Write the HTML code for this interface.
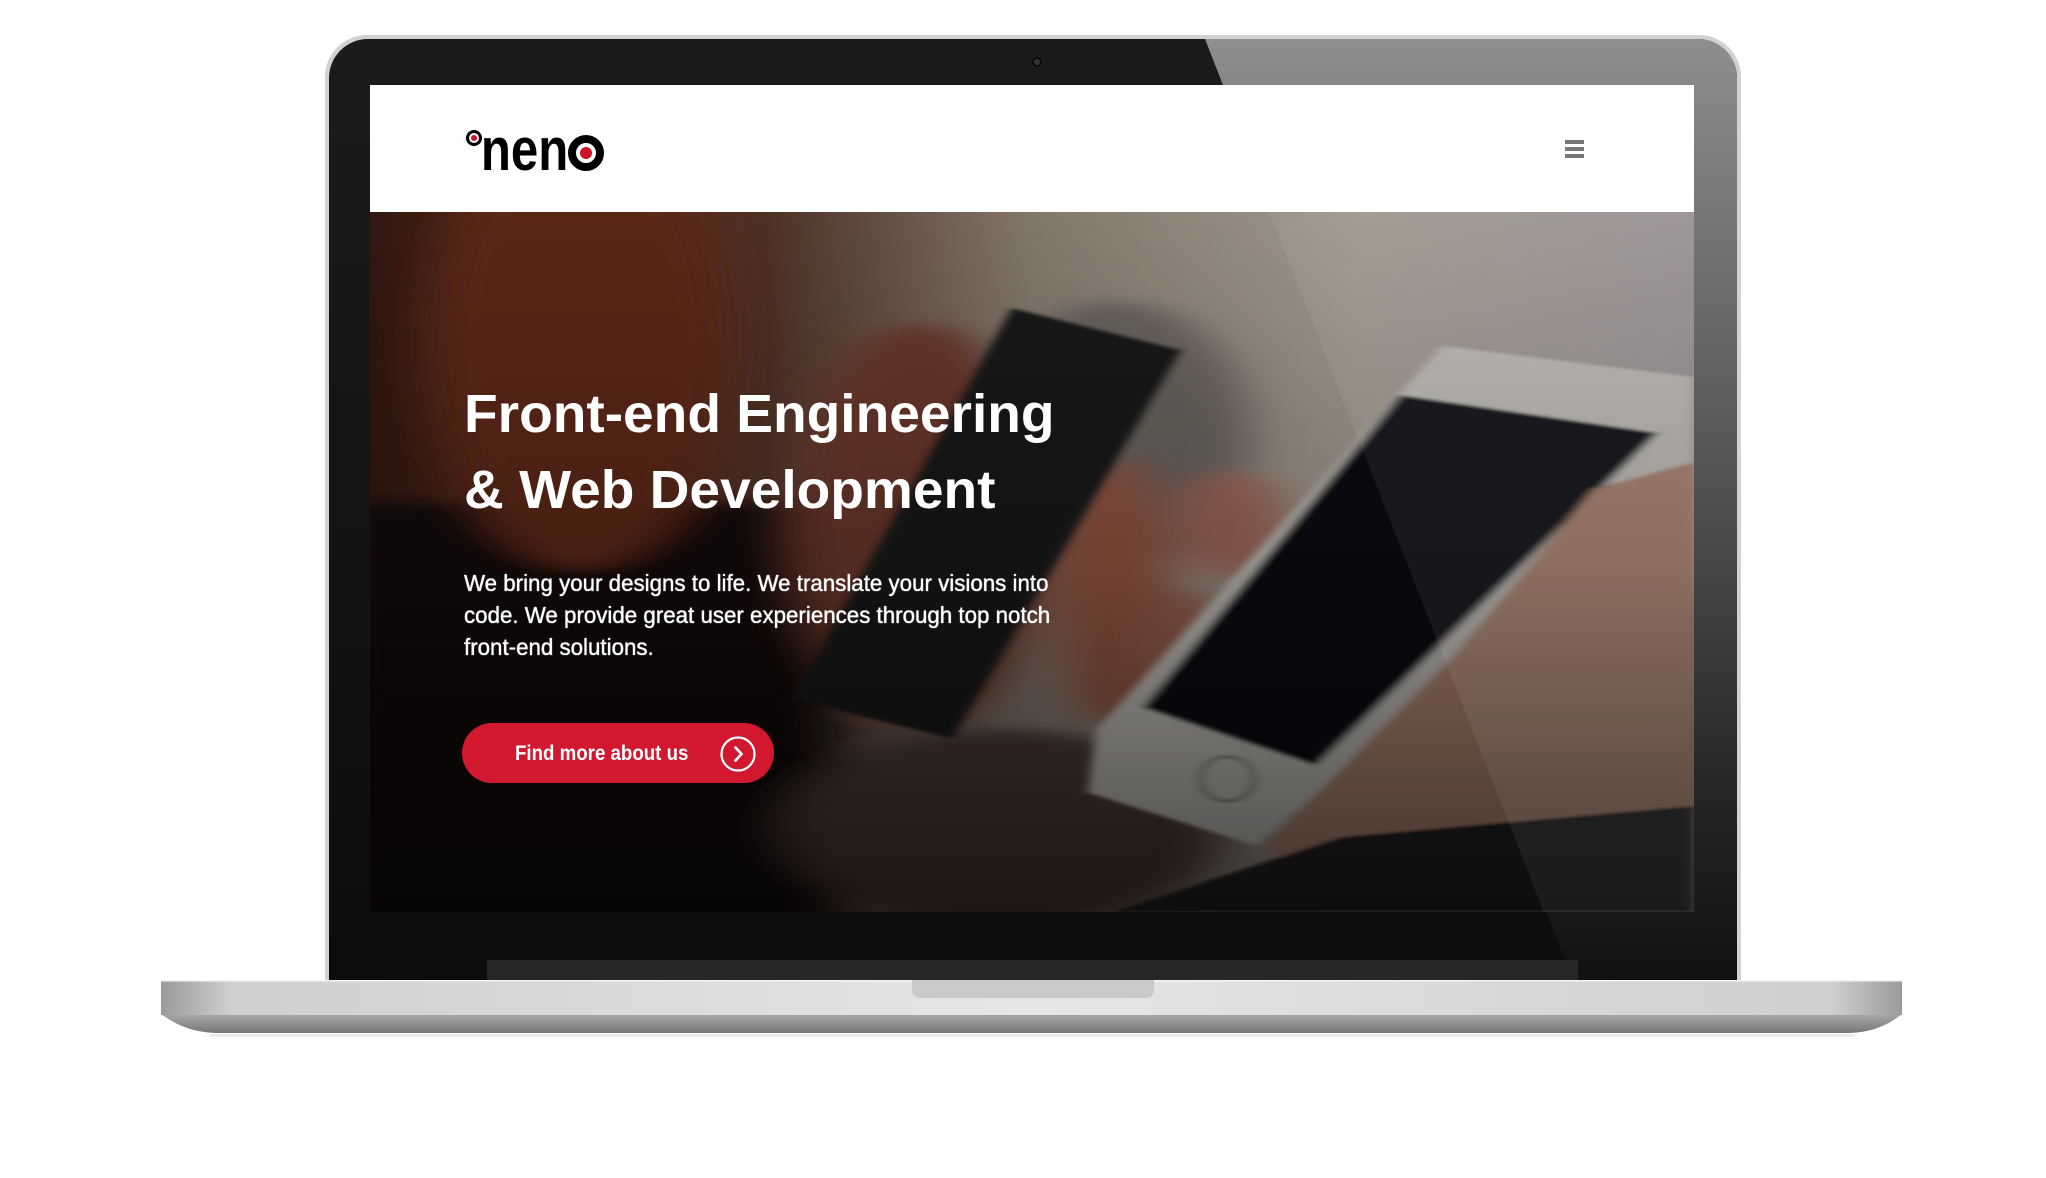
<!DOCTYPE html>
<html><head><meta charset="utf-8"><style>
html,body{margin:0;padding:0;background:#fff;width:2046px;height:1178px;overflow:hidden;position:relative}
*{box-sizing:border-box}
.abs{position:absolute}
#lid{left:325px;top:35px;width:1416px;height:948px;border-radius:42px 42px 0 0;background:#d2d2d4;}
#bezel{left:329px;top:39px;width:1408px;height:944px;border-radius:39px 39px 0 0;background:linear-gradient(#1b1b1b,#0c0c0c);overflow:hidden}
#screen{left:370px;top:85px;width:1324px;height:827px;overflow:hidden;background:#222}
#header{left:0;top:0;width:1324px;height:127px;background:#fff;z-index:3}
#hero{left:0;top:127px;width:1324px;height:700px;overflow:hidden}
.t{font-family:"Liberation Sans",sans-serif;color:#fff;white-space:nowrap;transform-origin:0 0}
</style></head><body>
<div id="lid" class="abs"></div>
<div id="bezel" class="abs">
  <svg class="abs" style="left:0;top:0" width="1408" height="944">
    <defs><linearGradient id="gl" x1="0" y1="0" x2="0" y2="1"><stop offset="0" stop-color="#8e8e8e"/><stop offset="0.45" stop-color="#555"/><stop offset="0.8" stop-color="#252525"/><stop offset="1" stop-color="#111"/></linearGradient></defs>
    <polygon points="876,0 1408,0 1408,944 1245,944" fill="url(#gl)"/>
    <circle cx="708" cy="23" r="4" fill="#333" stroke="#050505" stroke-width="1.5"/>
    <rect x="158" y="921" width="1091" height="23" fill="#262626"/>
  </svg>
</div>
<div id="screen" class="abs">
  <div id="header" class="abs">
    <svg class="abs" style="left:92px;top:40px" width="150" height="50">
      <circle cx="12" cy="13" r="6.5" fill="#fff" stroke="#000" stroke-width="3"/>
      <circle cx="12" cy="13" r="3" fill="#d0112b"/>
      <text x="19" y="45" font-family="Liberation Sans,sans-serif" font-weight="bold" font-size="60" transform="scale(0.82,1) translate(4,0)" fill="#000">nen</text>
      <circle cx="124" cy="28" r="14" fill="#fff" stroke="#000" stroke-width="8"/>
      <circle cx="124" cy="28" r="6" fill="#d0112b"/>
    </svg>
    <div class="abs" style="left:1195px;top:55px;width:19px;height:4px;background:#777"></div>
    <div class="abs" style="left:1195px;top:62px;width:19px;height:4px;background:#777"></div>
    <div class="abs" style="left:1195px;top:69px;width:19px;height:4px;background:#777"></div>
  </div>
  <div id="hero" class="abs">
    <svg class="abs" style="left:0;top:0" width="1324" height="700" viewBox="0 0 1568 1568" preserveAspectRatio="none">
      <defs>
        <filter id="b" x="-20%" y="-20%" width="140%" height="140%"><feGaussianBlur stdDeviation="30 14"/></filter>
        <filter id="b2"><feGaussianBlur stdDeviation="6 3"/></filter>
        <linearGradient id="bg" x1="0" y1="0" x2="1" y2="0"><stop offset="0" stop-color="#3a1d14"/><stop offset="0.15" stop-color="#6b3220"/><stop offset="0.3" stop-color="#5a3a2e"/><stop offset="0.5" stop-color="#9a8c7e"/><stop offset="0.75" stop-color="#bcb2a5"/><stop offset="1" stop-color="#b3abae"/></linearGradient>
        <linearGradient id="dk" x1="0" y1="0" x2="0" y2="1"><stop offset="0" stop-color="#000" stop-opacity="0"/><stop offset="0.5" stop-color="#000" stop-opacity="0.2"/><stop offset="1" stop-color="#000" stop-opacity="0.6"/></linearGradient>
      </defs>
      <rect width="1568" height="1568" fill="url(#bg)"/>
      <g filter="url(#b)">
        <rect x="-50" y="650" width="600" height="950" fill="#140e0c"/>
        <ellipse cx="250" cy="300" rx="180" ry="500" fill="#6a2e1a"/>
        <ellipse cx="880" cy="500" rx="160" ry="300" fill="#7a736c"/>
        <ellipse cx="650" cy="700" rx="150" ry="450" fill="#7a4030"/>
        <ellipse cx="880" cy="850" rx="70" ry="300" fill="#a8604c"/>
        <ellipse cx="750" cy="1380" rx="260" ry="220" fill="#5a4540"/>
        <ellipse cx="1020" cy="700" rx="60" ry="120" fill="#b87565"/>
        <ellipse cx="960" cy="1000" rx="60" ry="150" fill="#ac6a58"/>
        <ellipse cx="1400" cy="1000" rx="260" ry="500" fill="#c09583"/>
        <ellipse cx="1500" cy="700" rx="110" ry="200" fill="#d2ae9f"/>
      </g>
      <g filter="url(#b2)">
        <polygon points="760,215 960,310 690,1180 500,1090" fill="#1c1c1f"/>
        <polygon points="1270,300 1568,370 1568,560 1050,1420 850,1300 860,1160" fill="#dcd8d2"/>
        <polygon points="1220,410 1525,495 1120,1240 915,1110" fill="#111112"/>
        <ellipse cx="1015" cy="1270" rx="32" ry="50" fill="none" stroke="#8f8a84" stroke-width="6"/>
        <polygon points="1568,560 1568,1568 1150,1568 1060,1420 1280,1000 1450,620" fill="#c4967f"/>
        <polygon points="880,1568 1150,1400 1568,1330 1568,1568" fill="#2a2527"/>
      </g>
      <rect width="1568" height="1568" fill="url(#dk)"/>
      <rect width="1568" height="1568" fill="#000" opacity="0.15"/>
      <polygon points="1065,0 1568,0 1568,1568 1390,1568" fill="#fff" opacity="0.06"/>
    </svg>
    <div class="abs t" style="left:94px;top:164px;font-size:54px;font-weight:bold;line-height:76px;transform:scaleX(1.02)">Front-end Engineering<br>&amp; Web Development</div>
    <div class="abs t" style="left:94px;top:355px;font-size:23px;line-height:32px;transform:scaleX(0.97);text-shadow:0 0 0.7px #fff,0 0 0.7px #fff">We bring your designs to life. We translate your visions into<br>code. We provide great user experiences through top notch<br>front-end solutions.</div>
    <div class="abs" style="left:92px;top:511px;width:312px;height:60px;border-radius:30px;background:#d2182e"></div>
    <div class="abs t" style="left:145px;top:529px;font-size:21px;font-weight:bold;line-height:26px;transform:scaleX(0.89)">Find more about us</div>
    <svg class="abs" style="left:349px;top:523px" width="38" height="38"><circle cx="19" cy="19" r="16.5" fill="none" stroke="#fff" stroke-width="2.2"/><path d="M16.5 12.5 L22.5 19 L16.5 25.5" fill="none" stroke="#fff" stroke-width="2.6" stroke-linecap="round"/></svg>
  </div>
</div>
<svg class="abs" style="left:150px;top:978px" width="1765" height="64">
  <defs>
    <linearGradient id="bt" x1="0" y1="0" x2="1" y2="0"><stop offset="0" stop-color="#9a9a9c"/><stop offset="0.04" stop-color="#cfcfd1"/><stop offset="0.5" stop-color="#e6e6e8"/><stop offset="0.96" stop-color="#cfcfd1"/><stop offset="1" stop-color="#9a9a9c"/></linearGradient>
    <linearGradient id="bb" x1="0" y1="0" x2="0" y2="1"><stop offset="0" stop-color="#a9a9ab"/><stop offset="1" stop-color="#77777a"/></linearGradient>
  </defs>
  <path d="M11 36 L1752 36 Q1730 54 1700 55 L65 55 Q35 54 11 36 Z" fill="url(#bb)"/>
  <rect x="11" y="2" width="1741" height="35" fill="url(#bt)"/>
  <rect x="11" y="2" width="1741" height="1.5" fill="#f4f4f4"/>
  <path d="M762 2 L1004 2 L1004 12 Q1004 20 994 20 L772 20 Q762 20 762 12 Z" fill="#c9c9cb"/>
  <rect x="60" y="56" width="1645" height="3" fill="#ddd" opacity="0.6"/>
</svg>
</body></html>
